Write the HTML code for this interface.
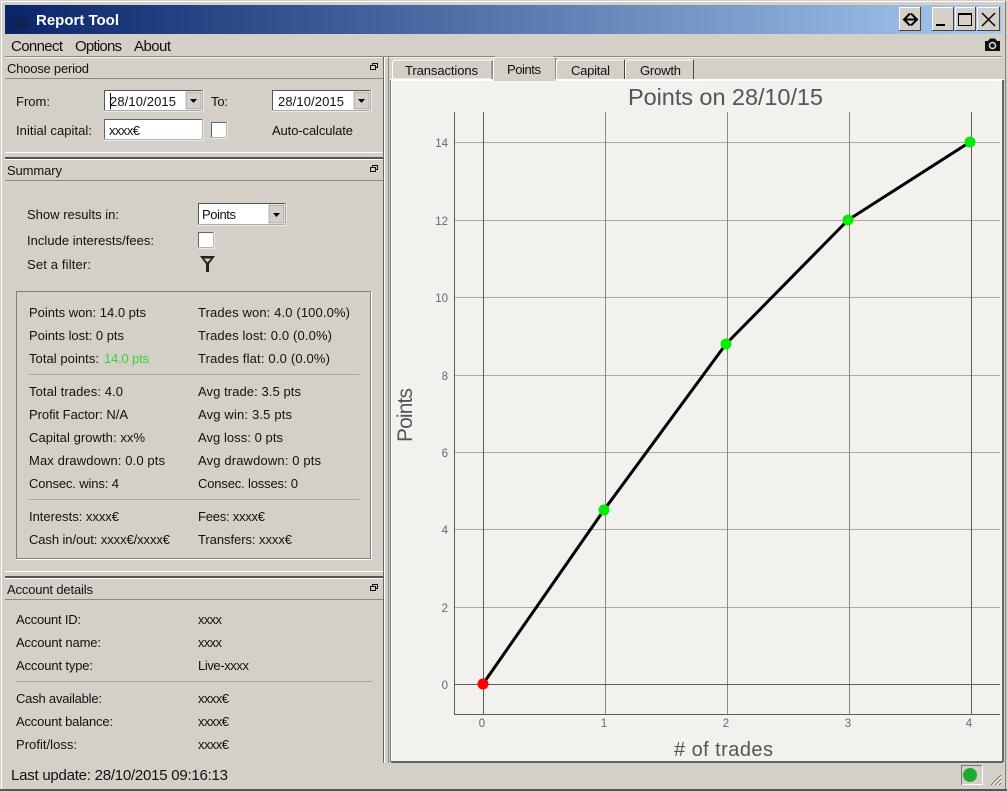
<!DOCTYPE html>
<html><head><meta charset="utf-8"><title>Report Tool</title>
<style>
html,body{margin:0;padding:0;background:#d4d0c8;width:1007px;height:791px;overflow:hidden}
svg{display:block}
text{font-family:"Liberation Sans",sans-serif;font-size:13px;fill:#111}
.m{font-size:15px}
.t{fill:#6b6470;font-size:11.500px}
.h{fill:#555;}
</style></head><body>
<svg width="1007" height="791" viewBox="0 0 1007 791" xmlns="http://www.w3.org/2000/svg">
<defs><linearGradient id="g" x1="0" x2="1" y1="0" y2="0"><stop offset="0" stop-color="#0a246a"/><stop offset="1" stop-color="#a6caf0"/></linearGradient></defs>
<rect width="1007" height="791" fill="#d4d0c8"/>
<!-- window frame -->
<rect x="1" y="1" width="1005" height="1" fill="#fff"/>
<rect x="1" y="1" width="1" height="788" fill="#fff"/>
<rect x="1005" y="1" width="1" height="788" fill="#808080"/>
<rect x="0" y="789" width="1007" height="2" fill="#555"/>
<rect x="5" y="5" width="997" height="29" fill="url(#g)"/>
<!-- app icon -->
<g fill="#10204a"><rect x="11" y="14" width="1" height="14"/><rect x="11" y="27" width="18" height="1"/><rect x="14" y="20" width="2" height="7"/><rect x="17" y="17" width="2" height="10"/><rect x="20" y="19" width="2" height="8"/><rect x="23" y="15" width="2" height="12"/><rect x="26" y="18" width="2" height="9"/></g>
<text x="36" y="25" textLength="83" style="font-size:15px;font-weight:bold;fill:#fff">Report Tool</text>
<!-- title buttons -->
<g>
<rect x="899" y="7" width="22" height="24" fill="#d4d0c8"/>
<path d="M899.500 31V7.500H921" stroke="#fff" fill="none"/><path d="M899 30.500H920.500V7" stroke="#444" fill="none"/>
<path d="M910 13.500L904 19.500L910 25.500M911 13.500L917 19.500L911 25.500M905 19.500H916" fill="none" stroke="#000" stroke-width="2"/>
<rect x="932" y="7" width="22" height="24" fill="#d4d0c8"/>
<path d="M932.500 31V7.500H954" stroke="#fff" fill="none"/><path d="M932 30.500H953.500V7" stroke="#444" fill="none"/>
<rect x="936" y="24" width="9" height="2" fill="#000"/>
<rect x="955" y="7" width="21" height="24" fill="#d4d0c8"/>
<path d="M955.500 31V7.500H976" stroke="#fff" fill="none"/><path d="M955 30.500H975.500V7" stroke="#444" fill="none"/>
<rect x="958.500" y="14.500" width="13" height="11" fill="none" stroke="#000"/><rect x="958" y="13" width="14" height="2" fill="#000"/>
<rect x="977" y="7" width="23" height="24" fill="#d4d0c8"/>
<path d="M977.500 31V7.500H1000" stroke="#fff" fill="none"/><path d="M977 30.500H999.500V7" stroke="#444" fill="none"/>
<path d="M982 13l13 13M995 13l-13 13" stroke="#000" stroke-width="1.500" fill="none"/>
</g>
<!-- menu -->
<text class="m" x="11" y="51" textLength="52">Connect</text>
<text class="m" x="75" y="51" textLength="47">Options</text>
<text class="m" x="134" y="51" textLength="37">About</text>
<path d="M985 51V41h3l2-2.500h5l2 2.500h3v10z" fill="#111"/><circle cx="992.500" cy="45.500" r="3" fill="none" stroke="#ddd" stroke-width="1.500"/>
<rect x="5" y="56" width="997" height="1" fill="#888"/><rect x="5" y="57" width="997" height="1" fill="#f4f3ef"/>
<!-- dock borders -->
<rect x="383" y="57" width="1" height="706" fill="#666"/>
<rect x="384" y="57" width="1" height="706" fill="#fff"/>
<rect x="388" y="57" width="1" height="706" fill="#888"/>
<!-- Choose period -->
<text x="7" y="73" textLength="82">Choose period</text>
<rect x="5" y="78" width="378" height="1" fill="#8a8882"/>
<g fill="none" stroke="#111"><rect x="372.500" y="63.500" width="5" height="4"/><rect x="370.500" y="65.500" width="5" height="4" fill="#d4d0c8"/></g>
<text x="16" y="106" textLength="34">From:</text>
<g><rect x="104.500" y="90.500" width="98" height="20" fill="#fff" stroke="#555"/><path d="M104 111h99V90" stroke="#fff" fill="none"/>
<rect x="186" y="92" width="15" height="17" fill="#d4d0c8" stroke="#777" stroke-width=".5"/><path d="M190 99h7l-3.500 4z" fill="#000"/>
<rect x="110" y="93" width="1" height="16" fill="#000"/></g>
<text x="110" y="106" textLength="66">28/10/2015</text>
<text x="211" y="106" textLength="17">To:</text>
<g><rect x="272.500" y="90.500" width="98" height="20" fill="#fff" stroke="#555"/><path d="M272 111h99V90" stroke="#fff" fill="none"/>
<rect x="354" y="92" width="15" height="17" fill="#d4d0c8" stroke="#777" stroke-width=".5"/><path d="M358 99h7l-3.500 4z" fill="#000"/></g>
<text x="278" y="106" textLength="66">28/10/2015</text>
<text x="16" y="135" textLength="76">Initial capital:</text>
<rect x="104.500" y="119.500" width="98" height="20" fill="#fff" stroke="#666"/><path d="M104 140h99V119" stroke="#fff" fill="none"/>
<text x="109" y="135" textLength="31">xxxx€</text>
<rect x="211.500" y="122.500" width="15" height="15" fill="#fff" stroke="#666"/><path d="M211 138h16V122" stroke="#fff" fill="none"/>
<text x="272" y="135" textLength="81">Auto-calculate</text>
<!-- separator -->
<rect x="5" y="152" width="378" height="1" fill="#fff"/><rect x="5" y="157" width="378" height="2" fill="#555"/><rect x="5" y="159" width="378" height="1" fill="#fff"/>
<!-- Summary -->
<text x="7" y="175" textLength="55">Summary</text>
<rect x="5" y="180" width="378" height="1" fill="#8a8882"/>
<g fill="none" stroke="#111"><rect x="372.500" y="165.500" width="5" height="4"/><rect x="370.500" y="167.500" width="5" height="4" fill="#d4d0c8"/></g>
<text x="27" y="219" textLength="92">Show results in:</text>
<rect x="198.500" y="203.500" width="87" height="21" fill="#fff" stroke="#555"/><path d="M198 225h88V203" stroke="#fff" fill="none"/>
<rect x="269" y="205" width="15" height="18" fill="#d4d0c8" stroke="#777" stroke-width=".5"/><path d="M273 213h7l-3.500 4z" fill="#000"/>
<text x="202" y="219" textLength="34">Points</text>
<text x="27" y="245" textLength="127">Include interests/fees:</text>
<rect x="198.500" y="232.500" width="15" height="15" fill="#fff" stroke="#666"/><path d="M198 248h16V232" stroke="#fff" fill="none"/>
<text x="27" y="269" textLength="64">Set a filter:</text>
<path d="M200 256h15l-6 8v8h-3v-8zM204 258.500l3.500 4 3.500-4z" fill="#222" fill-rule="evenodd"/>
<!-- group -->
<rect x="16.500" y="291.500" width="354" height="267" fill="none" stroke="#808080"/>
<path d="M16 559.500h355.500V291" stroke="#fff" fill="none"/>
<text x="29" y="317" textLength="117">Points won: 14.0 pts</text>
<text x="198" y="317" textLength="152">Trades won: 4.0 (100.0%)</text>
<text x="29" y="340" textLength="95">Points lost: 0 pts</text>
<text x="198" y="340" textLength="134">Trades lost: 0.0 (0.0%)</text>
<text x="29" y="363" textLength="70">Total points:</text>
<text x="104" y="363" textLength="45" style="fill:#3ad03a">14.0 pts</text>
<text x="198" y="363" textLength="132">Trades flat: 0.0 (0.0%)</text>
<rect x="29" y="374" width="330" height="1" fill="#a8a59f"/>
<text x="29" y="396" textLength="94">Total trades: 4.0</text>
<text x="198" y="396" textLength="103">Avg trade: 3.5 pts</text>
<text x="29" y="419" textLength="99">Profit Factor: N/A</text>
<text x="198" y="419" textLength="94">Avg win: 3.5 pts</text>
<text x="29" y="442" textLength="116">Capital growth: xx%</text>
<text x="198" y="442" textLength="85">Avg loss: 0 pts</text>
<text x="29" y="465" textLength="136">Max drawdown: 0.0 pts</text>
<text x="198" y="465" textLength="123">Avg drawdown: 0 pts</text>
<text x="29" y="488" textLength="90">Consec. wins: 4</text>
<text x="198" y="488" textLength="100">Consec. losses: 0</text>
<rect x="29" y="499" width="330" height="1" fill="#a8a59f"/>
<text x="29" y="521" textLength="90">Interests: xxxx€</text>
<text x="198" y="521" textLength="67">Fees: xxxx€</text>
<text x="29" y="544" textLength="141">Cash in/out: xxxx€/xxxx€</text>
<text x="198" y="544" textLength="94">Transfers: xxxx€</text>
<!-- separator -->
<rect x="5" y="571" width="378" height="1" fill="#fff"/><rect x="5" y="576" width="378" height="2" fill="#555"/><rect x="5" y="578" width="378" height="1" fill="#fff"/>
<!-- Account details -->
<text x="7" y="594" textLength="86">Account details</text>
<rect x="5" y="599" width="378" height="1" fill="#8a8882"/>
<g fill="none" stroke="#111"><rect x="372.500" y="584.500" width="5" height="4"/><rect x="370.500" y="586.500" width="5" height="4" fill="#d4d0c8"/></g>
<text x="16" y="624" textLength="65">Account ID:</text><text x="198" y="624" textLength="24">xxxx</text>
<text x="16" y="647" textLength="85">Account name:</text><text x="198" y="647" textLength="24">xxxx</text>
<text x="16" y="670" textLength="77">Account type:</text><text x="198" y="670" textLength="51">Live-xxxx</text>
<rect x="16" y="681" width="356" height="1" fill="#a8a59f"/>
<text x="16" y="703" textLength="86">Cash available:</text><text x="198" y="703" textLength="31">xxxx€</text>
<text x="16" y="726" textLength="97">Account balance:</text><text x="198" y="726" textLength="31">xxxx€</text>
<text x="16" y="749" textLength="61">Profit/loss:</text><text x="198" y="749" textLength="31">xxxx€</text>
<!-- tabs -->
<path d="M392.500 79V62l2-2h97v19z" fill="#d4d0c8" stroke="#fff"/>
<path d="M492 79V60.500M555.500 79V58M624.500 79V60M693.500 79V60" stroke="#444" fill="none"/>
<path d="M556.500 79V62l2-2h65" fill="none" stroke="#fff"/>
<path d="M625.500 79V62l2-2h65" fill="none" stroke="#fff"/>
<text x="405" y="75" textLength="73">Transactions</text>
<text x="571" y="75" textLength="39">Capital</text>
<text x="640" y="75" textLength="41">Growth</text>
<!-- pane -->
<rect x="390" y="79" width="614" height="684" fill="#808080"/>
<rect x="390.500" y="79.500" width="613" height="683" fill="none" stroke="#fff"/>
<rect x="391" y="80" width="612" height="682" fill="#f2f1ed"/>
<rect x="391" y="761" width="612" height="2" fill="#666"/><rect x="1002" y="80" width="2" height="682" fill="#666"/>
<rect x="390" y="80" width="1" height="682" fill="#777"/><rect x="391" y="80" width="1" height="681" fill="#fff"/>
<rect x="392" y="80" width="610" height="1" fill="#fff"/>
<path d="M493.500 81V59l2-2h58l2 2v22z" fill="#d4d0c8" stroke="none"/>
<path d="M493.500 80V59l2-2h58" fill="none" stroke="#fff"/>
<text x="507" y="74" textLength="34">Points</text>
<!-- chart -->
<text x="628" y="105" textLength="195" class="h" style="font-size:23.500px">Points on 28/10/15</text>
<path d="M454 142.500H1000M454 220.500H1000M454 297.500H1000M454 375.500H1000M454 452.500H1000M454 529.500H1000M454 607.500H1000" fill="none" stroke="#aaa8a2"/>
<path d="M605.500 112V714M727.500 112V714M849.500 112V714" fill="none" stroke="#8a8884"/>
<path d="M483.500 112V714M971.500 112V714M454 684.500H1000M1000 714.500H454.500V112" fill="none" stroke="#5c5c5a"/>
<polyline points="483,684 604,510 726,344 848,220 970,142" fill="none" stroke="#000" stroke-width="3"/>
<circle cx="483" cy="684" r="5.500" fill="#ff0000"/>
<circle cx="604" cy="510" r="5.500" fill="#00ee00"/>
<circle cx="726" cy="344" r="5.500" fill="#00ee00"/>
<circle cx="848" cy="220" r="5.500" fill="#00ee00"/>
<circle cx="970" cy="142" r="5.500" fill="#00ee00"/>
<g text-anchor="end">
<text class="t" x="448" y="147">14</text><text class="t" x="448" y="225">12</text><text class="t" x="448" y="302">10</text>
<text class="t" x="448" y="380">8</text><text class="t" x="448" y="457">6</text><text class="t" x="448" y="534">4</text><text class="t" x="448" y="612">2</text><text class="t" x="448" y="689">0</text>
</g>
<g text-anchor="middle">
<text class="t" x="482" y="727">0</text><text class="t" x="604" y="727">1</text><text class="t" x="726" y="727">2</text><text class="t" x="848" y="727">3</text><text class="t" x="969" y="727">4</text>
</g>
<text x="674" y="756" textLength="99" class="h" style="font-size:20px"># of trades</text>
<text transform="translate(412,442) rotate(-90)" textLength="54" class="h" style="font-size:21px">Points</text>
<!-- status -->
<text x="11" y="780" textLength="217" style="font-size:15px">Last update: 28/10/2015 09:16:13</text>
<rect x="961.500" y="765.500" width="21" height="19" fill="#d4d0c8" stroke="#fff"/>
<path d="M961.500 785V765.500H982" stroke="#777" fill="none"/>
<circle cx="970" cy="775" r="7" fill="#22aa2e"/>
<path d="M991 785l10-10M995 785l6-6M999 785l2-2" stroke="#777" fill="none"/>
<path d="M993 785l8-8M997 785l4-4" stroke="#fff" fill="none"/>
</svg>
</body></html>
